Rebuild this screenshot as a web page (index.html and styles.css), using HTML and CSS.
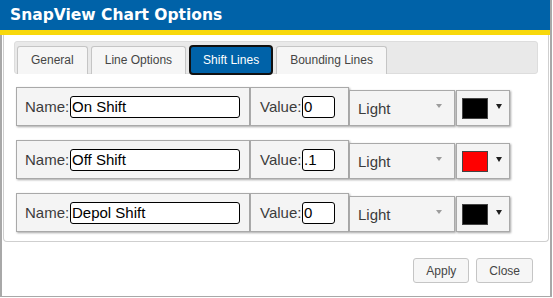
FILE: index.html
```html
<!DOCTYPE html>
<html>
<head>
<meta charset="utf-8">
<link rel="stylesheet" href="styles.css">
</head>
<body>
<div class="dialog">
  <div class="titlebar"><span class="title">SnapView Chart Options</span></div>
  <div class="stripe"></div>
  <div class="panel">
    <ul class="tabs">
      <li class="tab">General</li>
      <li class="tab">Line Options</li>
      <li class="tab active">Shift Lines</li>
      <li class="tab">Bounding Lines</li>
    </ul>
    <div class="rows">
      <div class="row">
        <div class="cell name-cell"><span class="lbl">Name:</span><input class="txt name-input" value="On Shift"></div>
        <div class="cell value-cell"><span class="lbl">Value:</span><input class="txt value-input" value="0"></div>
        <div class="cell select-cell"><span class="sel-text">Light</span><span class="caret"></span></div>
        <div class="cell color-cell"><span class="swatch black"></span><span class="arrow"></span></div>
      </div>
      <div class="row">
        <div class="cell name-cell"><span class="lbl">Name:</span><input class="txt name-input" value="Off Shift"></div>
        <div class="cell value-cell"><span class="lbl">Value:</span><input class="txt value-input" value=".1"></div>
        <div class="cell select-cell"><span class="sel-text">Light</span><span class="caret"></span></div>
        <div class="cell color-cell"><span class="swatch red"></span><span class="arrow"></span></div>
      </div>
      <div class="row">
        <div class="cell name-cell"><span class="lbl">Name:</span><input class="txt name-input" value="Depol Shift"></div>
        <div class="cell value-cell"><span class="lbl">Value:</span><input class="txt value-input" value="0"></div>
        <div class="cell select-cell"><span class="sel-text">Light</span><span class="caret"></span></div>
        <div class="cell color-cell"><span class="swatch black"></span><span class="arrow"></span></div>
      </div>
    </div>
  </div>
  <div class="buttons">
    <button class="btn">Apply</button>
    <button class="btn">Close</button>
  </div>
</div>
</body>
</html>
```

FILE: styles.css
```css
html, body {
  margin: 0;
  padding: 0;
  background: #ffffff;
}

.dialog {
  box-sizing: border-box;
  width: 552px;
  height: 297px;
  border: 2px solid #a8a8a8;
  border-top: none;
  border-bottom-width: 1px;
  background: #ffffff;
  font-family: "Liberation Sans", Arial, sans-serif;
}

.titlebar {
  height: 30px;
  margin-left: -2px;
  background: #0062a8;
  padding-left: 10px;
  line-height: 30px;
}

.title {
  font-family: "DejaVu Sans", Verdana, sans-serif;
  font-weight: bold;
  font-size: 15.5px;
  color: #ffffff;
}

.stripe {
  height: 5px;
  margin-left: -2px;
  background: #f8d80b;
}

.panel {
  box-sizing: border-box;
  margin: 0 1px;
  height: 207px;
  border: 1px solid #cfcfcf;
  border-top: none;
  border-radius: 0 0 4px 4px;
  padding: 6px 10px 9px 10px;
}

.tabs {
  box-sizing: border-box;
  list-style: none;
  margin: 0;
  height: 33px;
  padding: 4px 2px 0 2px;
  background: #e9e9e9;
  border: 1px solid #dddddd;
  border-radius: 3px;
  display: flex;
  align-items: flex-start;
  gap: 3px;
}

.tab {
  box-sizing: border-box;
  height: 28px;
  line-height: 26px;
  padding: 0 13px;
  background: #f6f6f6;
  border: 1px solid #c5c5c5;
  border-bottom: none;
  border-radius: 3px 3px 0 0;
  font-size: 12px;
  color: #454545;
}

.tab.active {
  height: 30px;
  margin-top: -1px;
  line-height: 26px;
  padding: 0 12px;
  background: #0062a8;
  border: 2px solid #111111;
  border-radius: 4px;
  color: #ffffff;
}

.rows {
  margin: 13px 0 0 2px;
  display: flex;
  flex-direction: column;
  gap: 14px;
}

.row {
  display: flex;
  align-items: flex-end;
  height: 39px;
}

.cell {
  box-sizing: border-box;
  display: flex;
  align-items: center;
  background: #f4f4f4;
  border: 1px solid #a9a9a9;
  box-shadow: 1px 1px 2px rgba(0, 0, 0, 0.35);
}

.lbl {
  font-size: 15px;
  color: #3c3c3c;
}

.txt {
  box-sizing: border-box;
  height: 22px;
  margin: 0;
  padding: 0 1px;
  border: 1px solid #000000;
  border-radius: 3px;
  background: #ffffff;
  font-family: "Liberation Sans", Arial, sans-serif;
  font-size: 15px;
  color: #000000;
  outline: none;
}

.name-cell {
  width: 234px;
  height: 39px;
  padding: 0 9px 0 8px;
  justify-content: space-between;
}

.name-input {
  width: 170px;
}

.value-cell {
  width: 99px;
  height: 39px;
  padding: 0 13px 0 9px;
  justify-content: space-between;
}

.value-input {
  width: 33px;
}

.select-cell {
  width: 106px;
  height: 36px;
  padding: 0 12px 0 8px;
  justify-content: space-between;
}

.sel-text {
  font-size: 15px;
  color: #3c3c3c;
}

.caret {
  width: 0;
  height: 0;
  margin-top: -5px;
  border-left: 3.5px solid transparent;
  border-right: 3.5px solid transparent;
  border-top: 4px solid #9d9d9d;
}

.color-cell {
  width: 54px;
  height: 36px;
  margin-left: 1px;
  padding: 0 0 0 5px;
}

.swatch {
  box-sizing: border-box;
  width: 26px;
  height: 21px;
  border: 1px solid #444444;
}

.swatch.black {
  background: #000000;
}

.swatch.red {
  background: #ff0000;
}

.arrow {
  width: 0;
  height: 0;
  margin: -3px 0 0 8px;
  border-left: 3.5px solid transparent;
  border-right: 3.5px solid transparent;
  border-top: 5px solid #1e1e1e;
}

.buttons {
  display: flex;
  justify-content: flex-end;
  gap: 7px;
  padding: 16px 17px 0 0;
}

.btn {
  box-sizing: border-box;
  height: 25px;
  margin: 0;
  padding: 0 12px;
  background: #f6f6f6;
  border: 1px solid #c5c5c5;
  border-radius: 3px;
  font-family: "Liberation Sans", Arial, sans-serif;
  font-size: 12px;
  color: #454545;
}
```
